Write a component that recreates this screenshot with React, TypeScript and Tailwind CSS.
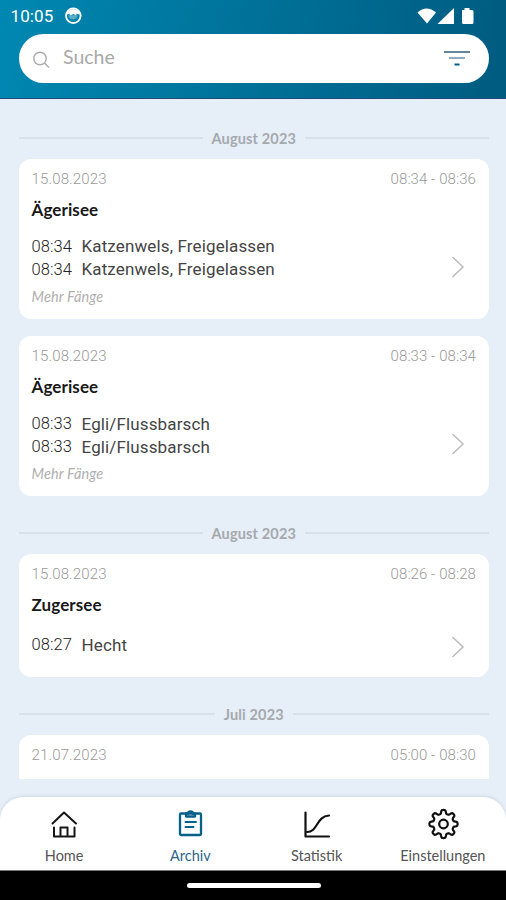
import React from 'react';

type Catch = { time: string; name: string };

type Trip = {
  date: string;
  range: string;
  lake?: string;
  catches?: Catch[];
  more?: boolean;
};

const firstTrips: Trip[] = [
  {
    date: '15.08.2023',
    range: '08:34 - 08:36',
    lake: 'Ägerisee',
    catches: [
      { time: '08:34', name: 'Katzenwels, Freigelassen' },
      { time: '08:34', name: 'Katzenwels, Freigelassen' },
    ],
    more: true,
  },
  {
    date: '15.08.2023',
    range: '08:33 - 08:34',
    lake: 'Ägerisee',
    catches: [
      { time: '08:33', name: 'Egli/Flussbarsch' },
      { time: '08:33', name: 'Egli/Flussbarsch' },
    ],
    more: true,
  },
];

const secondTrip: Trip = {
  date: '15.08.2023',
  range: '08:26 - 08:28',
  lake: 'Zugersee',
  catches: [{ time: '08:27', name: 'Hecht' }],
};

// Eight rounded teeth around the centre of a 32x32 box
const gearPath =
  Array.from({ length: 160 }, (_, i) => {
    const a = (i / 160) * Math.PI * 2;
    const r = 12.2 + 1.9 * Math.tanh(2.2 * Math.cos(8 * a));
    return `${i ? 'L' : 'M'}${(16.5 + r * Math.cos(a)).toFixed(2)} ${(16 + r * Math.sin(a)).toFixed(2)}`;
  }).join('') + 'Z';

const Divider: React.FC<{ label: string }> = ({ label }) => (
  <div className="flex h-5 items-center gap-[9px]">
    <div className="-mt-0.5 h-[2px] flex-1 bg-[#d8e0e9]" />
    <span className="font-['Lato',sans-serif] text-[14.5px] font-bold leading-5 tracking-[0.15px] text-[#a5a9ae]">{label}</span>
    <div className="-mt-0.5 h-[2px] flex-1 bg-[#d8e0e9]" />
  </div>
);

const TripHead: React.FC<{ date: string; range: string }> = ({ date, range }) => (
  <div className="flex justify-between font-['Roboto',sans-serif] text-[15px] font-light leading-5 text-[#999]">
    <span className="tracking-[0.15px]">{date}</span>
    <span className="tracking-[0.07px]">{range}</span>
  </div>
);

const TripCard: React.FC<{ trip: Trip }> = ({ trip }) => (
  <div
    className={`flex flex-col rounded-xl bg-white px-[12.5px] pt-[10px] ${trip.more ? 'h-[160px]' : 'h-[123px]'}`}
  >
    <TripHead date={trip.date} range={trip.range} />
    <h2 className="mt-[10px] font-['Lato',sans-serif] text-[17px] font-bold leading-[22px] tracking-[0.1px] text-[#181818]">{trip.lake}</h2>
    <div className="mt-[15px] flex items-start justify-between">
      <div className={trip.more ? '' : 'pt-[3px]'}>
        {trip.catches?.map((c, i) => (
          <div key={i} className="flex h-[23px] items-center font-['Roboto',sans-serif] text-[16.5px]">
            <span className="w-[50px] font-light tracking-[0.1px] text-[#222]">{c.time}</span>
            <span className="text-[17px] tracking-[0.13px] text-[#444]">{c.name}</span>
          </div>
        ))}
        {trip.more && (
          <div className="mt-[5px] font-['Lato',sans-serif] text-[14.5px] italic leading-5 tracking-[0.1px] text-[#b0b0b0]">Mehr Fänge</div>
        )}
      </div>
      <svg
        className={`mr-[11px] h-[22px] w-[14px] ${trip.more ? 'mt-[20px]' : 'mt-[5px]'}`}
        viewBox="0 0 14 22"
        fill="none"
        stroke="#bdbdbd"
        strokeWidth="1.6"
      >
        <path d="M1.5 1 12 11 1.5 21" />
      </svg>
    </div>
  </div>
);

const StatusBar = () => (
  <div className="flex h-[34px] items-center justify-between pl-[10.5px] pr-[32px] text-white">
    <div className="-mt-[2px] flex items-center gap-[11px]">
      <span className="font-['Roboto',sans-serif] text-[17px] leading-5 tracking-[0.1px]">10:05</span>
      <svg className="h-[18px] w-[18px]" viewBox="0 0 18 18" fill="none">
        <circle cx="9.3" cy="8.7" r="7.3" stroke="white" strokeWidth="1.8" />
        <path d="M2.8 5.5Q9.3-1.5 15.8 5.5L14.5 7.5 12.8 6.5 12 8.5 9.5 7 6 8.5 5.2 6.5 3.5 7.5Z" fill="white" />
        <path d="M4.5 8.2h9v1.3Q12 12.5 9 12.5T4.5 9.5Z" fill="white" fillOpacity="0.35" />
      </svg>
    </div>
    <svg className="-mt-[3px] h-[18px] w-[57px]" viewBox="0 0 57 18" fill="white">
      <path d="M0.5 5.5Q9.5-2.5 19 5.5L10 16.5Z" />
      <path d="M20.5 17 37 1v16Z" />
      <path d="M45 3h2.5V1h5v2H55q1.5 0 1.5 1.5v11q0 1.5-1.5 1.5H46.5q-1.5 0-1.5-1.5Z" />
    </svg>
  </div>
);

const Header = () => (
  <header className="h-[99px] shrink-0 border-b border-[#1c4a78] bg-linear-100 from-[#0088b2] to-[#005b80]">
    <StatusBar />
    <div className="ml-[19px] mr-[17px] flex h-[49px] items-center rounded-full bg-white pl-[13px] pr-[18.5px]">
      <svg className="mt-[2px] h-[18px] w-[18px]" viewBox="0 0 18 18" fill="none" stroke="#aaa" strokeWidth="1.4">
        <circle cx="8" cy="7.5" r="6.2" />
        <path d="M12.5 12 17 16.5" />
      </svg>
      <span className="-mt-[4px] ml-[13px] flex-1 font-['Lato',sans-serif] text-[19.5px] leading-6 text-[#a8a8a8]">Suche</span>
      <svg className="-mt-px h-[18px] w-[28px]" viewBox="0 0 28 18" fill="none" strokeWidth="2">
        <path d="M1 3h26" stroke="#66849c" />
        <path d="M6 9h16" stroke="#92aabb" />
        <path d="M11.5 15.5h5" stroke="#005f86" />
      </svg>
    </div>
  </header>
);

const NavItem: React.FC<{ label: string; active?: boolean; children: React.ReactNode }> = ({ label, active, children }) => (
  <div
    className={`flex flex-1 flex-col items-center pt-[11px] font-['Lato',sans-serif] text-[14.5px] leading-5 ${active ? 'text-[#2c668b]' : 'text-[#555]'}`}
  >
    <svg className="h-8 w-8" viewBox="0 0 32 32" fill="none" strokeLinecap="round" strokeLinejoin="round">
      {children}
    </svg>
    <span className="mt-[6px]">{label}</span>
  </div>
);

const BottomNav = () => (
  <nav className="h-[74px] shrink-0 rounded-t-[23px] border-b border-[#777] bg-white shadow-[0_-1px_3px_rgba(80,100,120,0.16)]">
    <div className="flex pl-px">
      <NavItem label="Home">
        <g stroke="#151515" strokeWidth="2">
          <path d="M4.5 15.5 16 4.5l12 11" />
          <path d="M6 19.5V28.5H26.5V19.5" />
          <path d="M12.5 28V19.5h7V28" />
        </g>
      </NavItem>
      <NavItem label="Archiv" active>
        <g stroke="#07608a" strokeWidth="2.3">
          <rect x="6" y="5.5" width="21" height="21.5" rx="1" />
          <path d="M12 5.5v3h9v-3" />
          <path d="M14 6q0-2.5 2.5-2.5t2.5 2.5" />
          <path d="M11.5 14h10.5M11.5 19h8" strokeWidth="1.9" />
        </g>
      </NavItem>
      <NavItem label="Statistik">
        <g stroke="#111" strokeWidth="2.2">
          <path d="M4.5 4.5V28.5H28" />
          <path d="M6 24C17 24 15 8.5 28 7.5" />
        </g>
      </NavItem>
      <NavItem label="Einstellungen">
        <g stroke="#111" strokeWidth="2.2">
          <path d={gearPath} />
          <circle cx="16.5" cy="16" r="4.3" />
        </g>
      </NavItem>
    </div>
  </nav>
);

const App: React.FC = () => {
  return (
    <div className="flex h-[900px] w-[506px] flex-col overflow-hidden bg-[#e6eef7]">
      <Header />
      <main className="h-[680px] shrink-0 overflow-hidden pl-[19px] pr-[17.5px] pt-[30px]">
        <Divider label="August 2023" />
        <div className="mb-[28px] mt-[9.5px] flex flex-col gap-[17.5px]">
          {firstTrips.map((trip, i) => (
            <TripCard key={i} trip={trip} />
          ))}
        </div>
        <Divider label="August 2023" />
        <div className="mb-[28px] mt-[10px]">
          <TripCard trip={secondTrip} />
        </div>
        <Divider label="Juli 2023" />
        <div className="mt-[10px] h-[100px] rounded-xl bg-white px-[12.5px] pt-[10px]">
          <TripHead date="21.07.2023" range="05:00 - 08:30" />
        </div>
      </main>
      <div className="h-[18px] shrink-0" />
      <BottomNav />
      {/* System gesture bar */}
      <div className="flex h-[29px] shrink-0 justify-center bg-black pl-px pt-[12px]">
        <div className="h-[5px] w-[134px] rounded-full bg-white" />
      </div>
    </div>
  );
};

export default App;
